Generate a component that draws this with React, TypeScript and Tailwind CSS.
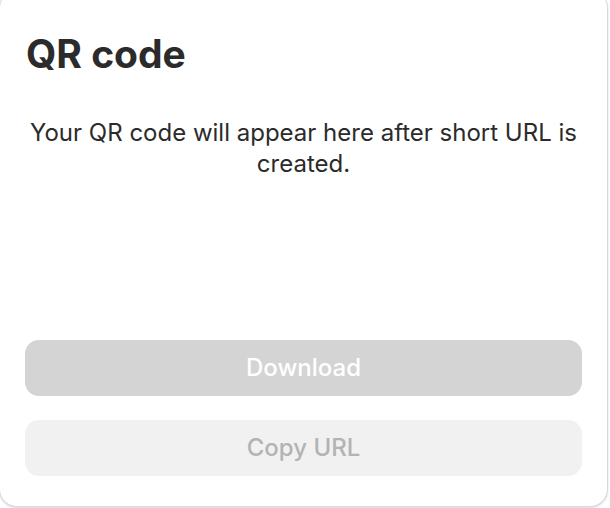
export default function App() {
  return (
    <div className="w-[610px] h-[508px] bg-white overflow-hidden relative" style={{ fontFamily: "Inter, 'Noto Sans', sans-serif" }}>
      <div className="absolute left-[-1px] right-[2px] top-[-10px] bottom-[1px] rounded-[18px] border border-[#d9d9d9] shadow-[0_1px_2px_rgba(0,0,0,0.15)] bg-white flex flex-col px-[25px] pt-[40px] pb-[30px]">
        <h1 className="text-[39px] font-bold text-[#2b2b2b] leading-[46px] pl-[1px]">QR code</h1>
        <p className="mt-[40px] text-[24px] leading-[31px] text-[#2b2b2b] text-center">
          Your QR code will appear here after short URL is created.
        </p>
        <div className="flex-1" />
        <button className="h-[56px] rounded-[14px] bg-[#d4d4d4] text-white text-[24px] font-medium">Download</button>
        <button className="mt-[24px] h-[56px] rounded-[14px] bg-[#f1f1f1] text-[#b3b3b3] text-[24px] font-medium">Copy URL</button>
      </div>
    </div>
  );
}
